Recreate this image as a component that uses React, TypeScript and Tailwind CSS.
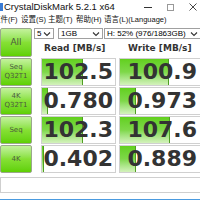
import React from "react";

const Chevron = () => (
  <svg width="8" height="6" viewBox="0 0 8 6" className="shrink-0">
    <path d="M1 1.5 L4 4.5 L7 1.5" stroke="#333" strokeWidth="1.1" fill="none" />
  </svg>
);

const Label = ({ a, b }: { a: string; b?: string }) => (
  <div className="w-[32px] h-[28px] shrink-0 border border-[#9aa88c] rounded-[2px] bg-gradient-to-b from-[#c4f29c] via-[#86e034] to-[#5fd000] flex flex-col items-center justify-center leading-[9px] text-[7px] text-[#4c5a40] font-['DejaVu_Sans',sans-serif]">
    <span>{a}</span>
    {b && <span>{b}</span>}
  </div>
);

const Cell = ({ v, bar, w, pr }: { v: string; bar: number; w: string; pr: string }) => (
  <div className={`${w} h-[28px] shrink-0 relative border border-[#d0d0d0] bg-white overflow-hidden`}>
    <div
      className="absolute left-0 top-0 bottom-0 bg-gradient-to-b from-[#62d01c] via-[#7ed848] to-[#d4f2bc] border-r border-[#4f9e22]"
      style={{ width: bar }}
    />
    <div className={`relative h-full flex items-center justify-end ${pr} font-['DejaVu_Sans',sans-serif] font-bold text-[22px] leading-none text-[#333333] tracking-[0px]`}>
      {v}
    </div>
  </div>
);

const Row = ({ a, b, r, rb, wv, wb }: { a: string; b?: string; r: string; rb: number; wv: string; wb: number }) => (
  <div className="flex h-[28px]">
    <Label a={a} b={b} />
    <div className="w-[9px] shrink-0" />
    <Cell v={r} bar={rb} w="w-[75px]" pr="pr-[2px]" />
    <div className="w-[3px] shrink-0" />
    <Cell v={wv} bar={wb} w="w-[84px]" pr="pr-[5px]" />
  </div>
);

export default function App() {
  return (
    <div className="w-[200px] h-[200px] overflow-hidden bg-white relative flex flex-col font-['Liberation_Sans','Noto_Sans_CJK_SC',sans-serif] text-black">
      {/* title bar */}
      <div className="h-[14px] flex items-center shrink-0">
        <div className="w-[3px] h-[8px] bg-[#3a7bd5] ml-0 mr-[1px]" />
        <span className="text-[9.5px] leading-none text-[#111]">CrystalDiskMark 5.2.1 x64</span>
        <div className="flex-1" />
        <div className="w-[8px] h-[1px] bg-[#333] mr-[15px]" />
        <div className="w-[7px] h-[7px] border border-[#999] mr-[15px]" />
        <svg width="8" height="8" viewBox="0 0 8 8" className="mr-[3px]">
          <path d="M0.5 0.5 L7.5 7.5 M7.5 0.5 L0.5 7.5" stroke="#333" strokeWidth="0.9" />
        </svg>
      </div>
      {/* menu bar */}
      <div className="h-[11px] flex items-center shrink-0 text-[7.5px] leading-none text-[#111] ml-[-7px]">
        <span className="w-[28px] shrink-0">文件(F)</span>
        <span className="w-[27px] shrink-0">设置(S)</span>
        <span className="w-[28px] shrink-0">主题(T)</span>
        <span className="w-[28px] shrink-0">帮助(H)</span>
        <span className="shrink-0">语言(L)(Language)</span>
      </div>
      <div className="h-[3px] shrink-0" />
      {/* top control row */}
      <div className="flex h-[29px] shrink-0">
        <div className="w-[32px] h-[29px] shrink-0 border border-[#9aa88c] rounded-[2px] bg-gradient-to-b from-[#c4f29c] via-[#86e034] to-[#5fd000] flex items-center justify-center text-[9px] text-[#4c5a40] font-['DejaVu_Sans',sans-serif]">
          All
        </div>
        <div className="flex flex-col ml-[2px] flex-1 min-w-0">
          <div className="flex h-[11px] gap-[3px] text-[8px] leading-none">
            <div className="w-[20px] h-[11px] border border-[#a0a0a0] bg-white flex items-center justify-between px-[2px] shrink-0">
              <span>5</span>
              <Chevron />
            </div>
            <div className="w-[45px] h-[11px] border border-[#a0a0a0] bg-white flex items-center justify-between px-[2px] shrink-0 ml-[1px]">
              <span>1GB</span>
              <Chevron />
            </div>
            <div className="w-[98px] h-[11px] border border-[#a0a0a0] bg-white flex items-center justify-between pl-[2px] pr-[3px] shrink-0 ml-[-2px]">
              <span>H: 52% (976/1863GB)</span>
              <Chevron />
            </div>
          </div>
          <div className="flex-1 flex items-center font-['DejaVu_Sans',sans-serif] font-bold text-[9px] text-[#333] leading-none">
            <span className="ml-[10px] w-[84px] shrink-0">Read [MB/s]</span>
            <span className="shrink-0">Write [MB/s]</span>
          </div>
        </div>
      </div>
      <div className="h-[1px] shrink-0" />
      <div className="flex flex-col gap-[1px] shrink-0">
        <Row a="Seq" b="Q32T1" r="102.5" rb={41} wv="100.9" wb={49} />
        <Row a="4K" b="Q32T1" r="0.780" rb={6} wv="0.973" wb={16} />
        <Row a="Seq" r="102.3" rb={41} wv="107.6" wb={50} />
        <Row a="4K" r="0.402" rb={2} wv="0.889" wb={16} />
      </div>
      <div className="h-[4px] shrink-0" />
      <div className="h-[16px] shrink-0 border border-[#cfcfcf] bg-white mr-[-2px]" />
      <div className="flex-1" />
      <div className="h-[1px] bg-[#4a9be0] shrink-0" />
    </div>
  );
}
